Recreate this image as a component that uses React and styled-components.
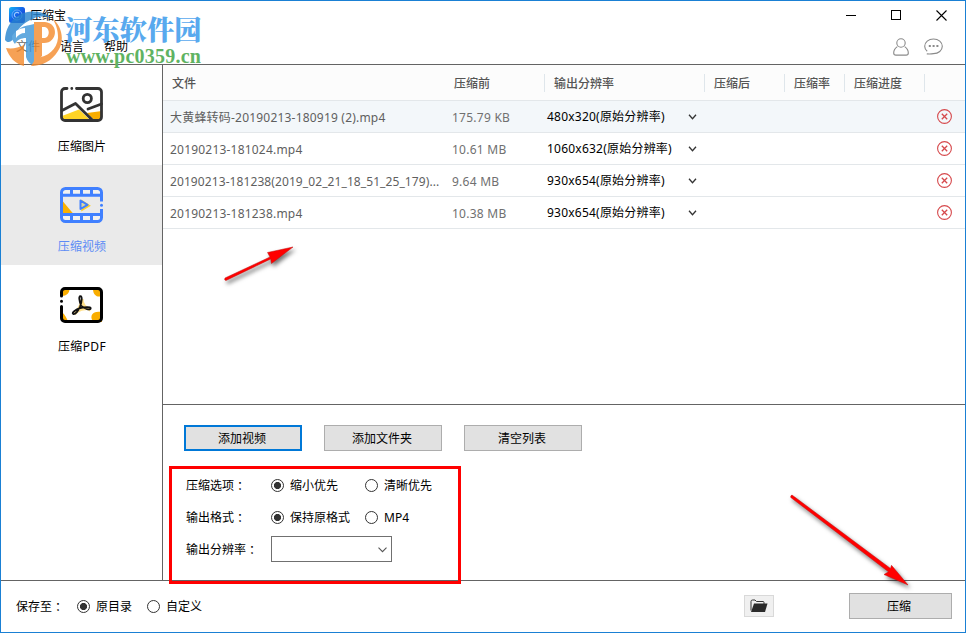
import {useState} from 'react'
import styled, {createGlobalStyle} from 'styled-components'

const columns = ['文件', '压缩前', '输出分辨率', '压缩后', '压缩率', '压缩进度', '']

const files = [
  {name: '大黄蜂转码-20190213-180919 (2).mp4', size: '175.79 KB', res: '480x320(原始分辨率)'},
  {name: '20190213-181024.mp4', size: '10.61 MB', res: '1060x632(原始分辨率)'},
  {name: '20190213-181238(2019_02_21_18_51_25_179)...', size: '9.64 MB', res: '930x654(原始分辨率)'},
  {name: '20190213-181238.mp4', size: '10.38 MB', res: '930x654(原始分辨率)'},
]

const tabs = [
  {id: 'image', label: '压缩图片', Icon: ImageIcon},
  {id: 'video', label: '压缩视频', Icon: VideoIcon},
  {id: 'pdf', label: '压缩PDF', Icon: PdfIcon},
]

export default function App() {
  const [tab, setTab] = useState('video')
  const [option, setOption] = useState(0)
  const [format, setFormat] = useState(0)
  const [target, setTarget] = useState(0)

  return (
    <>
      <GlobalStyle />
      <Window>
        <Header>
          <TitleBar>
            <AppIcon />
            <Title>压缩宝</Title>
            <WindowButtons>
              <svg width="11" height="11" shapeRendering="crispEdges"><path d="M0 5.5h10" stroke="#000" /></svg>
              <svg width="11" height="11" shapeRendering="crispEdges"><path d="M.5.5h9v9h-9z" fill="none" stroke="#000" /></svg>
              <svg width="11" height="11"><path d="M.5.5l10 10M10.500.5l-10 10" stroke="#000" strokeWidth="1.1" /></svg>
            </WindowButtons>
          </TitleBar>
          <MenuBar>
            <MenuItem $faded>文件</MenuItem>
            <MenuItem>语言</MenuItem>
            <MenuItem>帮助</MenuItem>
            <MenuIcons>
              <UserIcon />
              <ChatIcon />
            </MenuIcons>
          </MenuBar>
        </Header>

        <Body>
          <Sidebar>
            {tabs.map(({id, label, Icon}) => (
              <Tab key={id} $active={tab === id} onClick={() => setTab(id)}>
                <Icon />
                <TabLabel $wide={id === 'pdf'}>{label}</TabLabel>
              </Tab>
            ))}
          </Sidebar>

          <Main>
            <Table>
              <HeadRow>
                {columns.map((c, i) => <HeadCell key={i} $line={i > 1} $first={i === 0}>{c}</HeadCell>)}
              </HeadRow>
              {files.map((f, i) => (
                <Row key={f.name} $active={i === 0}>
                  <FileName $long={f.name.endsWith('...')}>{f.name}</FileName>
                  <Size>{f.size}</Size>
                  <Resolution>
                    <span>{f.res}</span>
                    <svg width="9" height="6"><path d="M1 .8l3.500 3.900L8 .8" fill="none" stroke="#333" strokeWidth="1.300" /></svg>
                  </Resolution>
                  <span />
                  <span />
                  <span />
                  <Remove><RemoveIcon /></Remove>
                </Row>
              ))}
            </Table>

            <Panel>
              <Buttons>
                <Button $primary>添加视频</Button>
                <Button>添加文件夹</Button>
                <Button>清空列表</Button>
              </Buttons>
              <Field>
                <Label>压缩选项<Colon>：</Colon></Label>
                <Radio label="缩小优先" on={option === 0} onClick={() => setOption(0)} width={94} />
                <Radio label="清晰优先" on={option === 1} onClick={() => setOption(1)} />
              </Field>
              <Field>
                <Label>输出格式<Colon>：</Colon></Label>
                <Radio label="保持原格式" on={format === 0} onClick={() => setFormat(0)} width={94} />
                <Radio label="MP4" on={format === 1} onClick={() => setFormat(1)} />
              </Field>
              <Field>
                <Label>输出分辨率<Colon>：</Colon></Label>
                <Select>
                  <svg width="9" height="6"><path d="M.5.7l4 4 4-4" fill="none" stroke="#555" strokeWidth="1.100" /></svg>
                </Select>
              </Field>
            </Panel>
          </Main>
        </Body>

        <Footer>
          <SaveLabel>保存至<Colon>：</Colon></SaveLabel>
          <Radio label="原目录" on={target === 0} onClick={() => setTarget(0)} width={70} />
          <Radio label="自定义" on={target === 1} onClick={() => setTarget(1)} />
          <FolderButton><FolderIcon /></FolderButton>
          <Button $width={103}>压缩</Button>
        </Footer>

        <Watermark>
          <WatermarkLogo />
          <WatermarkName>河东软件园</WatermarkName>
          <WatermarkUrl>www.pc0359.cn</WatermarkUrl>
        </Watermark>
        <Highlight />
        <Arrows />
      </Window>
    </>
  )
}

function Radio({label, on, onClick, width}) {
  return (
    <RadioWrap $width={width} onClick={onClick}>
      <Dot $on={on} />
      <RadioText>{label}</RadioText>
    </RadioWrap>
  )
}

function AppIcon() {
  return (
    <svg width="16" height="16" viewBox="0 0 16 16">
      <defs>
        <linearGradient id="app" x1="0" y1="0" x2="1" y2="1">
          <stop offset="0" stopColor="#15b8f5" />
          <stop offset=".45" stopColor="#1467ea" />
          <stop offset="1" stopColor="#2424c4" />
        </linearGradient>
      </defs>
      <rect width="16" height="16" rx="2.500" fill="url(#app)" />
      <circle cx="8" cy="8" r="5" fill="none" stroke="#6aa8f8" strokeWidth=".9" />
      <path d="M10 6.400a2.600 2.600 0 1 0 0 3.200" fill="none" stroke="#9cc8ff" strokeWidth="1.100" />
    </svg>
  )
}

function UserIcon() {
  return (
    <svg width="16" height="18" viewBox="0 0 16 18" fill="none" stroke="#8a8a8a" strokeWidth="1.100">
      <circle cx="8" cy="5" r="4.200" />
      <path d="M4.300 8.600C2 10.200.7 12.600.7 15c0 1.400.8 2.100 2.200 2.100h10.200c1.400 0 2.200-.7 2.200-2.100 0-2.400-1.300-4.800-3.600-6.400" />
    </svg>
  )
}

function ChatIcon() {
  return (
    <svg width="19" height="17" viewBox="0 0 19 17" fill="none" stroke="#8a8a8a" strokeWidth="1.100">
      <path d="M3.200 13.300C1.600 12 .7 10.200.7 8.300.7 4.200 4.500 1 9.500 1s8.800 3.200 8.800 7.300-3.800 7.300-8.800 7.300c-1.300.3-3.500.6-6.700.3" />
      <path d="M4.800 8h2M8.600 8h2M12.400 8h2" strokeWidth="1.800" />
    </svg>
  )
}

function ImageIcon() {
  return (
    <svg width="44" height="38" viewBox="0 0 44 38">
      <path d="M2 29l17-6.500L30 33H2z" fill="#ffd426" />
      <path d="M27 26l15-2v9H34z" fill="#f9ad00" />
      <g fill="none" stroke="#333" strokeWidth="2.800" strokeLinecap="round" strokeLinejoin="round">
        <path d="M7 1.500H5A3.500 3.500 0 0 0 1.500 5v25A3.500 3.500 0 0 0 5 33.500h33a3.500 3.500 0 0 0 3.500-3.500V5A3.500 3.500 0 0 0 38 1.500H16.500M11.800 1.500h.01" />
        <circle cx="27.300" cy="11.500" r="4.100" />
        <path d="M2 23.500l13.500-7L32 32.800M28 22l13.500-5" />
      </g>
    </svg>
  )
}

function VideoIcon() {
  return (
    <svg width="44" height="38" viewBox="0 0 44 38">
      <path d="M3 3h37v4H3zM3 29h37v4H3z" fill="#f1f1f1" />
      <path d="M3 14.500L13.500 27H3z" fill="#fbb000" />
      <path d="M22 13.800v9.500l7.500-4.500z" fill="#fcd02c" stroke="#fcd02c" strokeWidth="1.500" />
      <g fill="none" stroke="#4080ff" strokeWidth="3">
        <path d="M41.500 14.500V5.500a4 4 0 0 0-4-4h-32a4 4 0 0 0-4 4v25a4 4 0 0 0 4 4h32a4 4 0 0 0 4-4V22" />
        <path d="M2 8.300h39M2 27.500h39" />
        <path d="M11.500 2v6M21.500 2v6M31.500 2v6M11.500 28v6M21.500 28v6M31.500 28v6" />
      </g>
      <circle cx="41.500" cy="18.200" r="1.500" fill="#4080ff" />
      <path d="M20.500 13.500v8.500l7-4.200z" fill="#ddd7a0" stroke="#4080ff" strokeWidth="2" strokeLinejoin="round" />
    </svg>
  )
}

function PdfIcon() {
  return (
    <svg width="44" height="38" viewBox="0 0 44 38">
      <path d="M2 2h7.500c0 4-3 7-7.500 7zM2 25c3 3 5 6 6 10H2zM33 2c0 9 9 9 9 5V2zM42 25c-11-2-13 6-8 10h8z" fill="#f9ad00" />
      <g fill="none" stroke="#000" strokeWidth="3" strokeLinecap="round">
        <path d="M1.500 9V5A3.500 3.500 0 0 1 5 1.500h33A3.500 3.500 0 0 1 41.500 5v26a3.500 3.500 0 0 1-3.500 3.500H5A3.500 3.500 0 0 1 1.500 31V19.500M1.500 14.200h.01" />
      </g>
      <g fill="none" strokeLinejoin="round">
        <path d="M22.300 12c-1 5-2 9-7.500 15M15.800 25c5-3 10-4 14.500-3M22 12c0 5 3 9 8.500 11" stroke="#ffe08c" strokeWidth="3" />
        <path d="M21 18.500c-1.800-5-2.500-9.300-.6-9.300 2 0 1.600 5-.2 10-1.700 4.400-5 8.600-7 7.800-2-1 2.300-4.500 7-5.800 5-1.500 10.800-1.600 10.500.3-.3 2-6.500.5-9.700-3z" stroke="#111" strokeWidth="1.800" />
      </g>
    </svg>
  )
}

function RemoveIcon() {
  return (
    <svg width="15" height="15" viewBox="0 0 15 15" fill="none" stroke="#d6494c">
      <circle cx="7.500" cy="7.500" r="6.900" strokeWidth="1.100" />
      <path d="M4.800 4.800l5.400 5.400M10.200 4.800l-5.400 5.400" strokeWidth="1.300" />
    </svg>
  )
}

function FolderIcon() {
  return (
    <svg width="18" height="14" viewBox="0 0 18 14">
      <path d="M1 11.500V2.500Q1 1 2.500 1H5l1.500 1.500H13Q14 2.500 14 3.500V5" fill="none" stroke="#333" strokeWidth="1" />
      <path d="M4 4.500H17.500l-2.500 8.500H1z" fill="#2b2b2b" />
    </svg>
  )
}

function WatermarkLogo() {
  return (
    <svg width="60" height="60" viewBox="0 0 60 60">
      <g opacity=".8">
        <path d="M1 31C2 14 13 3 28 2.500 36 2 43 5 47 9c-7-2-13-2-18 1-9 3-16 10-19 19-3 5-7 5-9 2z" fill="#2583cf" />
        <path d="M8 27c4-6 10-10 18-11l4-1v42c-4-2-7-5-8-9V29c-5 0-9 2-11 6-2-2-3-5-3-8z" fill="#3d95d8" />
        <path d="M48 9c10 8 13 22 6 33-6 10-16 15-27 15l5-8c12-1 21-9 22-20 0-8-2-14-6-20z" fill="#f48a2b" />
        <path d="M2 39c6 1 12 0 18-3v21C11 55 5 48 2 39z" fill="#f48a2b" />
        <path d="M33 13h8c14 1 13 21-1 21h-2v13l-8 8V13z" fill="#f48a2b" />
        <path d="M38 18h3c5 1 5 10 0 11h-3z" fill="#fff" />
        <path d="M12 22c3-2 6-3 9-3v5c-4 0-7 2-9 5z" fill="#fff" />
      </g>
    </svg>
  )
}

function Arrows() {
  return (
    <ArrowLayer width="966" height="633">
      <g fill="#f00" stroke="#c01010" strokeWidth=".5">
        <path d="M225 278l45-21-2.500-4.500L293 247l-21.500 16.500-.8-4.500L226 280.500q-2 0-1-2.500z" />
        <path d="M792 495l98.500 73.500 1-3.200L908 585l-24-10.500 4.500-2.700L790.800 497.500q-.5-2 1.200-2.500z" />
      </g>
    </ArrowLayer>
  )
}

const GlobalStyle = createGlobalStyle`
  * { box-sizing: border-box; }
  body {
    margin: 0;
    overflow: hidden;
    font: 12px/16px 'Noto Sans', 'Noto Sans CJK SC', sans-serif;
    color: #000;
  }
  svg { display: block; flex: none; }
`
const Window = styled.div`
  position: relative;
  display: flex;
  flex-direction: column;
  width: 966px;
  height: 633px;
  border: 1px solid #1a80d4;
  background: #fff;
`
const Header = styled.header`
  height: 64px;
  border-bottom: 1px solid #646464;
`
const TitleBar = styled.div`
  display: flex;
  align-items: center;
  height: 28px;
  padding: 0 18px 0 8px;
`
const Title = styled.span`
  margin-left: 5px;
  padding-top: 2px;
`
const WindowButtons = styled.div`
  display: flex;
  gap: 34px;
  margin-left: auto;
`
const MenuBar = styled.nav`
  display: flex;
  align-items: center;
  gap: 20px;
  height: 35px;
  padding: 0 22px 0 15px;
`
const MenuItem = styled.span`
  width: 24px;
  padding-top: 1px;
  color: ${p => p.$faded ? '#666' : '#000'};
`
const MenuIcons = styled.div`
  display: flex;
  align-items: center;
  gap: 15px;
  margin-left: auto;
`
const Body = styled.div`
  display: flex;
  height: 516px;
  border-bottom: 1px solid #646464;
`
const Sidebar = styled.aside`
  width: 162px;
  border-right: 1px solid #646464;
`
const Tab = styled.div`
  display: flex;
  flex-direction: column;
  align-items: center;
  gap: 14px;
  height: 100px;
  padding-top: 22px;
  color: ${p => p.$active ? '#5c8cf5' : '#000'};
  background: ${p => p.$active ? '#eaeaea' : '#fff'};
  cursor: pointer;
`
const TabLabel = styled.span`
  padding-left: 1px;
  letter-spacing: ${p => p.$wide ? '.4px' : '.1px'};
`
const Main = styled.main`
  flex: 1;
`
const Table = styled.div`
  height: 340px;
  border-bottom: 1px solid #646464;
`
const HeadRow = styled.div`
  display: grid;
  grid-template-columns: 281px 100px 160px 80px 60px 80px 1fr;
  align-items: center;
  height: 36px;
  border-bottom: 1px solid #e3e7ea;
  background: #fcfcfc;
  color: #555;
  font-weight: 500;
`
const HeadCell = styled.div`
  height: 18px;
  line-height: 19px;
  padding-left: ${p => p.$first ? 8 : 9}px;
  border-left: 1px solid ${p => p.$line ? '#dfe6eb' : 'transparent'};
`
const Row = styled.div`
  display: grid;
  grid-template-columns: 281px 100px 160px 80px 60px 80px 1fr;
  align-items: center;
  height: 32px;
  border-bottom: 1px solid #e3e7ea;
  background: ${p => p.$active ? '#f3f7fa' : '#fff'};
`
const FileName = styled.span`
  padding: 2px 0 0 7px;
  color: #5f5f5f;
  letter-spacing: ${p => p.$long ? '.09px' : '.2px'};
  white-space: nowrap;
`
const Size = styled.span`
  padding: 2px 0 0 8px;
  color: #707070;
  letter-spacing: .25px;
`
const Resolution = styled.div`
  display: flex;
  align-items: center;
  justify-content: space-between;
  padding: 0 7px 0 3px;
  letter-spacing: .22px;

  svg { margin-top: 1px; }
`
const Remove = styled.div`
  padding-left: 13px;
`
const Panel = styled.div`
  padding: 20px 21px 0;
`
const Buttons = styled.div`
  display: flex;
  gap: 22px;
  margin-bottom: 18px;
`
const Button = styled.button`
  width: ${p => p.$width || 118}px;
  height: 26px;
  padding: ${p => p.$width ? '1px 3px 0 0' : '1px 2px 0 0'};
  border: ${p => p.$primary ? '2px solid #0078d7' : '1px solid #adadad'};
  background: #e1e1e1;
  color: #000;
  font: inherit;
`
const Field = styled.div`
  display: flex;
  align-items: center;
  height: 32px;
  padding-left: 2px;
`
const Label = styled.span`
  width: 85px;
  padding-top: 1px;
`
const Colon = styled.span`
  font-family: 'Noto Sans CJK TC', sans-serif;
  line-height: 1;
  vertical-align: -1px;
`
const RadioWrap = styled.div`
  display: flex;
  align-items: center;
  gap: 6px;
  width: ${p => p.$width ? p.$width + 'px' : 'auto'};
  white-space: nowrap;
`
const RadioText = styled.span`
  padding-top: 2px;
`
const Dot = styled.i`
  width: 13px;
  height: 13px;
  border: 1px solid #333;
  border-radius: 50%;
  background: ${p => p.$on ? 'radial-gradient(circle, #333 3.200px, #fff 3.900px)' : '#fff'};
`
const Select = styled.div`
  display: flex;
  align-items: center;
  justify-content: flex-end;
  width: 121px;
  height: 26px;
  padding: 1px 4px 0 0;
  border: 1px solid #707070;
`
const Footer = styled.footer`
  display: flex;
  align-items: center;
  flex: 1;
  padding: 0 13px 1px 15px;
`
const SaveLabel = styled.span`
  width: 61px;
  padding-top: 1px;
`
const FolderButton = styled.div`
  display: flex;
  align-items: center;
  justify-content: center;
  width: 30px;
  height: 22px;
  margin: 0 75px 0 auto;
  border: 1px solid #d9d9d9;
  background: #f0f0f0;
`
const Watermark = styled.div`
  position: absolute;
  left: 3px;
  top: 8px;
  display: grid;
  grid-template-columns: 60px auto;
  grid-template-rows: 37px 23px;
  pointer-events: none;

  svg { grid-row: 1 / 3; }
`
const WatermarkName = styled.span`
  margin-left: 1px;
  font: 900 27.300px/39px 'Noto Serif CJK SC', 'Noto Sans CJK SC', sans-serif;
  color: #58a9ee;
  white-space: nowrap;
`
const WatermarkUrl = styled.span`
  margin-left: 2px;
  font: bold 20px/21px 'Liberation Serif', serif;
  letter-spacing: .22px;
  color: #5fb362;
`
const Highlight = styled.div`
  position: absolute;
  left: 168px;
  top: 465px;
  width: 292px;
  height: 118px;
  border: 3px solid #f00;
  pointer-events: none;
`
const ArrowLayer = styled.svg`
  position: absolute;
  left: -1px;
  top: -1px;
  pointer-events: none;
  filter: drop-shadow(2px 3px 2px rgba(0, 0, 0, .55));
`
